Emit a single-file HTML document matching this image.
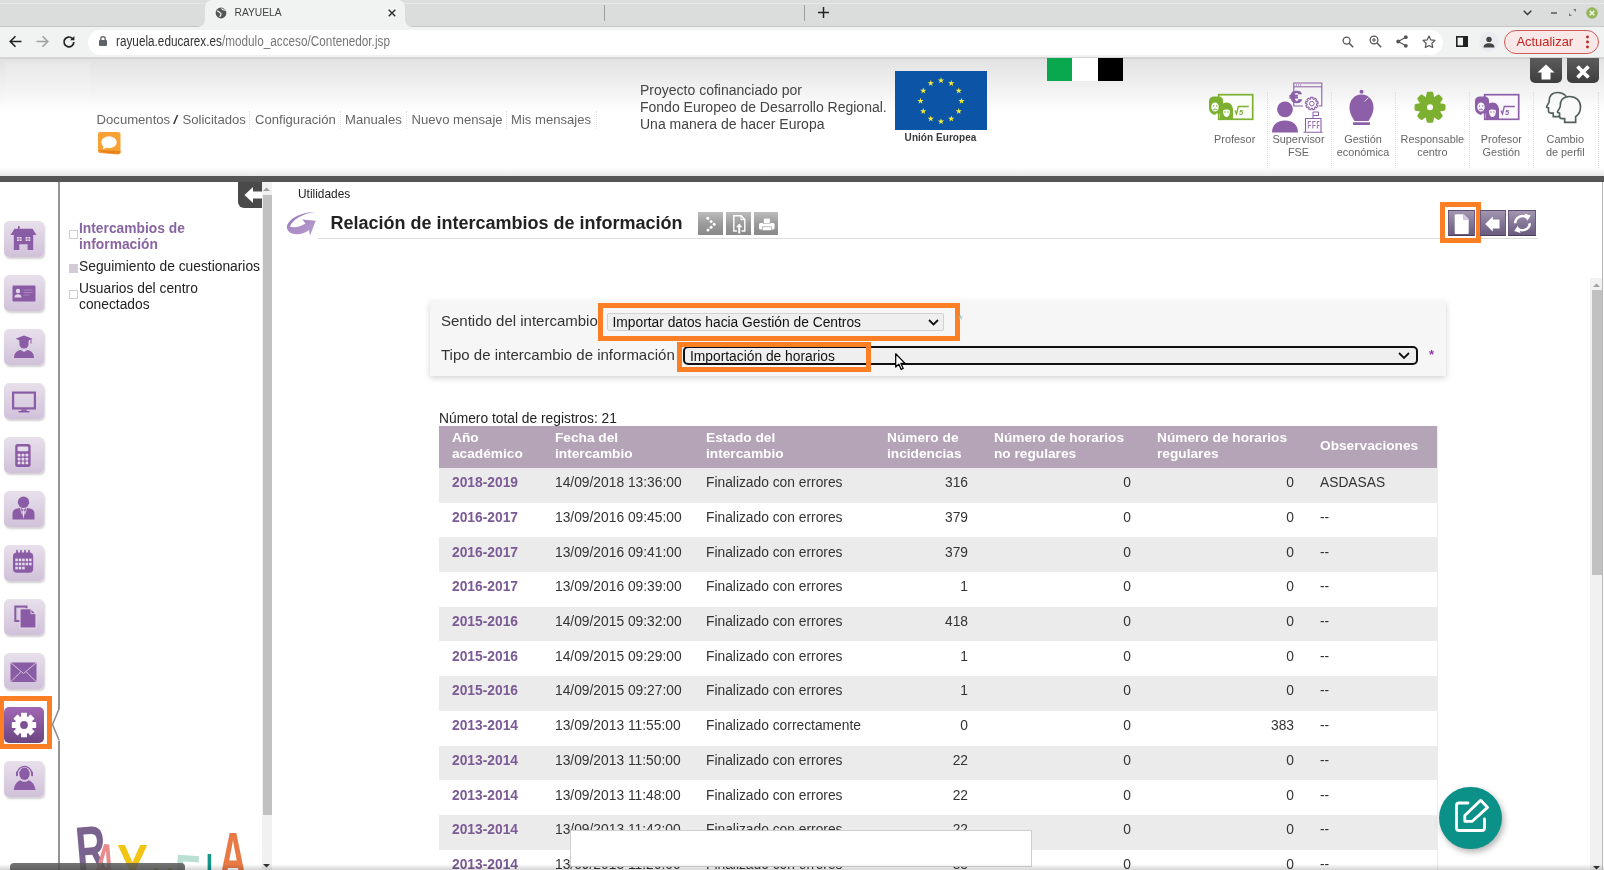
<!DOCTYPE html>
<html lang="es">
<head>
<meta charset="utf-8">
<title>RAYUELA</title>
<style>
*{box-sizing:border-box;margin:0;padding:0}
html,body{width:1604px;height:870px;overflow:hidden;background:#fff}
body{will-change:transform;position:relative;font-family:"Liberation Sans",sans-serif;font-size:14px;color:#222}
.abs{position:absolute}
svg{display:block;overflow:visible}

/* ---------- browser chrome ---------- */
#tabbar{left:0;top:0;width:1604px;height:27px;background:#dbdddd;border-bottom:1px solid #c6c8c8}
#tabbar .hl{left:0;top:3px;width:1604px;height:1px;background:#e6e8e8}
#tab{left:205px;top:0;width:199.500px;height:27px;background:#f1f2f2;border-radius:7px 7px 0 0}
#tab .ttl{left:29.500px;top:7.200px;font-size:10.300px;color:#444;letter-spacing:-.05px}
.tsep{top:5px;width:1px;height:16px;background:#9a9d9d}
#toolbar{left:0;top:27px;width:1604px;height:30px;background:#f1f2f2}
#tbline{left:0;top:57px;width:1604px;height:2px;background:#d4d4d4}
#urlpill{left:88px;top:29.500px;width:1355px;height:25.500px;background:#fff;border-radius:13px}
#url{left:116px;top:33px;font-size:14px;color:#333;white-space:nowrap;transform-origin:0 0;transform:scaleX(.84)}
#url span{color:#777}
#upd{left:1504px;top:30px;width:94.500px;height:24px;border:1px solid #cf5a57;border-radius:12px;background:#f9e8e7;color:#c5221f;font-size:12.900px;line-height:22px;padding-left:11.500px}
#prof{left:1479px;top:31.500px;width:20px;height:20px;border-radius:10px;background:#e9ecf1}

/* ---------- page header ---------- */
#hdr{left:0;top:59px;width:1604px;height:118px;background:linear-gradient(#e2e2e2 0,#ebebeb 14%,#f6f6f6 32%,#fff 46%,#fff 92%,#e4e4e4 100%)}
#darkbar{left:0;top:176px;width:1604px;height:6px;background:#555}
#nav{font-size:13.1px;color:#666;white-space:nowrap}
#nav b{color:#333;font-style:italic}
#nav i{font-style:normal;color:#ddd}
#eutxt{left:640px;top:82px;font-size:14px;line-height:17px;color:#444;white-space:nowrap}
#euflag{left:895px;top:70.700px;width:91.700px;height:59.300px;background:#0b54a6}
#eulbl{left:894.500px;top:131.800px;width:92px;text-align:center;font-size:10px;font-weight:bold;color:#3a3a3a;letter-spacing:.05px}
.fl{top:58.200px;width:25.500px;height:22.400px}
.role{top:133px;font-size:10.900px;line-height:12.900px;color:#666;text-align:center;width:70px}
.hbtn{top:58px;width:30px;height:25.200px;background:linear-gradient(#5c5c5c,#3d3d3d);border-radius:0 0 5px 5px}

/* ---------- left ---------- */
#vline{left:58.400px;top:182px;width:1.700px;height:688px;background:#949494}
.sb{left:4px;width:40px;height:36px;border-radius:5px;background:linear-gradient(#e8e0eb,#d0c1d9);box-shadow:1px 2px 2px rgba(60,40,70,.22)}
#menu{font-size:13.8px;line-height:16px;color:#222}
.cb{width:9px;height:9px;border:1px solid #d3cbd8;background:#fff}
#mscroll{left:262px;top:182px;width:10px;height:688px;background:#f1f1f1}
#mthumb{left:262.500px;top:195px;width:9px;height:620px;background:#c1c1c1}
#collapse{left:238px;top:182px;width:24px;height:26px;background:#4a4a4a;border-radius:0 0 0 6px}

/* ---------- content ---------- */
#crumb{left:298px;top:187px;font-size:11.900px;color:#222}
#title{left:330.500px;top:213px;font-size:18px;font-weight:bold;color:#222;white-space:nowrap}
#tline{left:318px;top:237.500px;width:1220px;height:1.500px;background:#dcdcdc}
.gbtn{top:212px;width:24px;height:23px;background:linear-gradient(#bcbcbc,#9c9c9c 50%,#888)}
.pbtn{top:210px;height:26px;background:linear-gradient(#a296b0,#867a99 45%,#6b5b7f);border:1px solid #6a5a80;border-top-color:#5d4d74;border-bottom-color:#4d405f}
.obox{border:5px solid #fd7f25}
#form{left:430px;top:301px;width:1016px;height:75px;background:#f6f6f6;box-shadow:0 2px 6px rgba(0,0,0,.18)}
.lbl{font-size:15px;color:#333;white-space:nowrap}
.sel{background:#efefef;font-size:13.8px;color:#111;white-space:nowrap}
#cscroll{left:1590px;top:278px;width:11.500px;height:592px;background:#f1f1f1}
#cthumb{left:1592px;top:290px;width:9.500px;height:285px;background:#c1c1c1}
#wedge{left:1601.700px;top:182px;width:1.500px;height:688px;background:#b8b8b8}

/* table */
#cnt{left:439px;top:410.500px;font-size:13.8px;color:#222}
#tbl{left:439px;top:426px;width:998px;border-collapse:collapse;font-size:13.8px;color:#333}
#tbl th{background:#b5a3b8;color:#fff;font-size:13.7px;line-height:15.7px;text-align:left;font-weight:bold;padding:0 0 3px 13px;height:42px;vertical-align:middle}
#tbl td{height:34.7px;padding:0 0 5px 13px;white-space:nowrap}
#tbl tr:nth-child(even) td{background:#ebebeb}
#tbl td.y{color:#7b5a96;font-weight:bold}
#tbl td.n{text-align:right;padding-right:13px}
#fab{left:1439.300px;top:786.700px;width:62.500px;height:62.500px;border-radius:32px;background:#0c9189;box-shadow:2px 3px 6px rgba(0,0,0,.3)}
#popup{left:569.500px;top:830px;width:462.500px;height:36.500px;background:#fff;border:1px solid #cfcfcf}
#hbar{left:10px;top:863px;width:175px;height:8px;background:rgba(90,90,90,.85);border-radius:4px 4px 0 0}
</style>
</head>
<body>

<!-- ======= browser chrome ======= -->
<div id="tabbar" class="abs"><div class="hl abs"></div></div>
<div id="tab" class="abs">
  <svg class="abs" style="left:9.500px;top:6.500px" width="12" height="12" viewBox="0 0 12 12"><circle cx="6" cy="6" r="5.4" fill="#555"/><path d="M2 4.2c1.2-.2 2 .3 2.500 1.200s1.700.6 1.600 1.900c-.1 1-1 1.300-1.300 2.600" stroke="#f2f3f3" stroke-width="1.200" fill="none"/><path d="M7 1.200c-.3 1 .6 1.500 1.500 1.500s1.400.7 2.200.7" stroke="#f2f3f3" stroke-width="1.100" fill="none"/></svg>
  <div class="ttl abs">RAYUELA</div>
  <svg class="abs" style="left:182.500px;top:8.700px" width="8" height="8" viewBox="0 0 8 8"><path d="M.7.7l6.600 6.600M7.300.7L.7 7.300" stroke="#333" stroke-width="1.500"/></svg>
</div>
<svg class="abs" style="left:197px;top:19px" width="8" height="8" viewBox="0 0 8 8"><path d="M8 0v8H0c5 0 8-3 8-8z" fill="#f1f2f2"/></svg><svg class="abs" style="left:404.500px;top:19px" width="8" height="8" viewBox="0 0 8 8"><path d="M0 0v8h8c-5 0-8-3-8-8z" fill="#f1f2f2"/></svg>
<div class="tsep abs" style="left:604px"></div>
<div class="tsep abs" style="left:804px"></div>
<svg class="abs" style="left:818px;top:7px" width="11" height="11" viewBox="0 0 11 11"><path d="M5.500 0v11M0 5.500h11" stroke="#222" stroke-width="1.500"/></svg>
<svg class="abs" style="left:1523px;top:10px" width="9" height="6" viewBox="0 0 9 6"><path d="M.7.700l3.800 3.800L8.300.700" stroke="#333" stroke-width="1.400" fill="none"/></svg>
<div class="abs" style="left:1551px;top:12px;width:6px;height:2px;background:#777"></div>
<svg class="abs" style="left:1569px;top:9px" width="7" height="7" viewBox="0 0 7 7"><path d="M4 0h3v3zM0 7V4l3 3z" fill="#777"/></svg>
<svg class="abs" style="left:1585px;top:6px" width="14" height="14" viewBox="0 0 14 14"><circle cx="7" cy="7" r="5.800" fill="#96b65c"/><path d="M4.700 4.700l4.600 4.600M9.300 4.700L4.700 9.300" stroke="#f4f8ec" stroke-width="1.500"/></svg>

<div id="toolbar" class="abs"></div>
<div id="tbline" class="abs"></div>
<svg class="abs" style="left:9px;top:35px" width="13" height="13" viewBox="0 0 13 13"><path d="M12.500 6.500H1.500M6.500 1.200L1.200 6.500l5.300 5.300" stroke="#222" stroke-width="1.600" fill="none"/></svg>
<svg class="abs" style="left:36px;top:35px" width="13" height="13" viewBox="0 0 13 13"><path d="M.5 6.500h11M6.500 1.200l5.300 5.300-5.300 5.300" stroke="#a0a0a0" stroke-width="1.600" fill="none"/></svg>
<svg class="abs" style="left:62px;top:35px" width="14" height="14" viewBox="0 0 14 14"><path d="M11.800 7a4.900 4.900 0 1 1-1.500-3.600" stroke="#222" stroke-width="1.700" fill="none"/><path d="M12.400.9v4.400H8z" fill="#222"/></svg>
<div id="urlpill" class="abs"></div>
<svg class="abs" style="left:99px;top:36px" width="8" height="10" viewBox="0 0 8 10"><rect x="0" y="4" width="8" height="6" rx="1" fill="#5f6368"/><path d="M1.800 4.500V2.800a2.200 2.200 0 0 1 4.400 0v1.700" stroke="#5f6368" stroke-width="1.300" fill="none"/></svg>
<div id="url" class="abs">rayuela.educarex.es<span>/modulo_acceso/Contenedor.jsp</span></div>
<!-- toolbar right icons -->
<svg class="abs" style="left:1342px;top:36px" width="12" height="12" viewBox="0 0 12 12"><circle cx="4.600" cy="4.600" r="3.500" stroke="#555" stroke-width="1.300" fill="none"/><path d="M7.300 7.300l3.900 3.900" stroke="#555" stroke-width="1.500"/></svg>
<svg class="abs" style="left:1369px;top:35px" width="13" height="13" viewBox="0 0 13 13"><circle cx="5" cy="5" r="3.900" stroke="#555" stroke-width="1.300" fill="none"/><path d="M8 8l4.200 4.200" stroke="#555" stroke-width="1.500"/><path d="M3 5h4M5 3v4" stroke="#555" stroke-width="1.100"/></svg>
<svg class="abs" style="left:1396px;top:35px" width="12" height="13" viewBox="0 0 12 13"><circle cx="9.800" cy="2.200" r="1.900" fill="#555"/><circle cx="2.200" cy="6.500" r="1.900" fill="#555"/><circle cx="9.800" cy="10.800" r="1.900" fill="#555"/><path d="M9.800 2.200L2.200 6.500l7.600 4.300" stroke="#555" stroke-width="1.100" fill="none"/></svg>
<svg class="abs" style="left:1422px;top:35px" width="14" height="13" viewBox="0 0 14 13"><path d="M7 1l1.800 3.900 4.200.5-3.100 2.900.8 4.200L7 10.400l-3.700 2.100.8-4.200L1 5.400l4.200-.5z" stroke="#555" stroke-width="1.200" fill="none" stroke-linejoin="round"/></svg>
<svg class="abs" style="left:1456px;top:36px" width="12" height="11" viewBox="0 0 12 11"><rect x=".8" y=".8" width="10.400" height="9.400" stroke="#222" stroke-width="1.600" fill="none"/><rect x="7" y=".8" width="4.200" height="9.400" fill="#222"/></svg>
<div id="prof" class="abs"><svg class="abs" style="left:4px;top:4px" width="12" height="12" viewBox="0 0 12 12"><circle cx="6" cy="3.400" r="2.700" fill="#444"/><path d="M.5 11.500c0-3 2.500-4.200 5.500-4.200s5.500 1.200 5.500 4.200z" fill="#444"/></svg></div>
<div id="upd" class="abs">Actualizar<svg class="abs" style="left:80.500px;top:4px" width="3" height="14" viewBox="0 0 3 14"><circle cx="1.500" cy="2" r="1.400" fill="#b3261e"/><circle cx="1.500" cy="7" r="1.400" fill="#b3261e"/><circle cx="1.500" cy="12" r="1.400" fill="#b3261e"/></svg></div>

<!-- ======= page header ======= -->
<div id="hdr" class="abs"></div>
<div id="darkbar" class="abs"></div>
<div class="abs" style="left:5px;top:62px;width:85px;height:56px;background:linear-gradient(rgba(255,255,255,.16),rgba(255,255,255,.05))"></div>
<div id="nav"><div class="abs" style="left:96.6px;top:112px">Documentos</div><div class="abs" style="left:182.5px;top:112px">Solicitados</div><div class="abs" style="left:255px;top:112px">Configuración</div><div class="abs" style="left:345px;top:112px">Manuales</div><div class="abs" style="left:411.6px;top:112px">Nuevo mensaje</div><div class="abs" style="left:511px;top:112px">Mis mensajes</div><div class="abs" style="left:173.500px;top:112px;color:#333;font-weight:bold;font-style:italic">/</div><div class="abs" style="left:249px;top:111px;width:0;height:18px;border-left:1px dotted #dedede"></div><div class="abs" style="left:340px;top:111px;width:0;height:18px;border-left:1px dotted #dedede"></div><div class="abs" style="left:406px;top:111px;width:0;height:18px;border-left:1px dotted #dedede"></div><div class="abs" style="left:506px;top:111px;width:0;height:18px;border-left:1px dotted #dedede"></div><div class="abs" style="left:596px;top:111px;width:0;height:18px;border-left:1px dotted #dedede"></div></div>
<div id="eutxt" class="abs">Proyecto cofinanciado por<br>Fondo Europeo de Desarrollo Regional.<br>Una manera de hacer Europa</div>
<div id="euflag" class="abs"></div>
<svg class="abs" style="left:894.500px;top:70.700px" width="92" height="60" viewBox="0 0 92 60"><path d="M46.00 6.20L46.74 8.48L49.14 8.48L47.20 9.89L47.94 12.17L46.00 10.76L44.06 12.17L44.80 9.89L42.86 8.48L45.26 8.48z" fill="#f6ee36"/><path d="M56.25 8.95L56.99 11.23L59.39 11.23L57.45 12.64L58.19 14.92L56.25 13.51L54.31 14.92L55.05 12.64L53.11 11.23L55.51 11.23z" fill="#f6ee36"/><path d="M63.75 16.45L64.49 18.73L66.89 18.73L64.95 20.14L65.69 22.42L63.75 21.01L61.81 22.42L62.55 20.14L60.62 18.73L63.01 18.73z" fill="#f6ee36"/><path d="M66.50 26.70L67.24 28.98L69.64 28.98L67.70 30.39L68.44 32.67L66.50 31.26L64.56 32.67L65.30 30.39L63.36 28.98L65.76 28.98z" fill="#f6ee36"/><path d="M63.75 36.95L64.49 39.23L66.89 39.23L64.95 40.64L65.69 42.92L63.75 41.51L61.81 42.92L62.55 40.64L60.62 39.23L63.01 39.23z" fill="#f6ee36"/><path d="M56.25 44.45L56.99 46.73L59.39 46.73L57.45 48.14L58.19 50.42L56.25 49.01L54.31 50.42L55.05 48.14L53.11 46.73L55.51 46.73z" fill="#f6ee36"/><path d="M46.00 47.20L46.74 49.48L49.14 49.48L47.20 50.89L47.94 53.17L46.00 51.76L44.06 53.17L44.80 50.89L42.86 49.48L45.26 49.48z" fill="#f6ee36"/><path d="M35.75 44.45L36.49 46.73L38.89 46.73L36.95 48.14L37.69 50.42L35.75 49.01L33.81 50.42L34.55 48.14L32.61 46.73L35.01 46.73z" fill="#f6ee36"/><path d="M28.25 36.95L28.99 39.23L31.38 39.23L29.45 40.64L30.19 42.92L28.25 41.51L26.31 42.92L27.05 40.64L25.11 39.23L27.51 39.23z" fill="#f6ee36"/><path d="M25.50 26.70L26.24 28.98L28.64 28.98L26.70 30.39L27.44 32.67L25.50 31.26L23.56 32.67L24.30 30.39L22.36 28.98L24.76 28.98z" fill="#f6ee36"/><path d="M28.25 16.45L28.99 18.73L31.38 18.73L29.45 20.14L30.19 22.42L28.25 21.01L26.31 22.42L27.05 20.14L25.11 18.73L27.51 18.73z" fill="#f6ee36"/><path d="M35.75 8.95L36.49 11.23L38.89 11.23L36.95 12.64L37.69 14.92L35.75 13.51L33.81 14.92L34.55 12.64L32.61 11.23L35.01 11.23z" fill="#f6ee36"/></svg>
<div id="eulbl" class="abs">Unión Europea</div>
<div class="fl abs" style="left:1046.500px;background:#09a84e"></div>
<div class="fl abs" style="left:1072px;background:#fff"></div>
<div class="fl abs" style="left:1097.500px;background:#000"></div>

<svg class="abs" style="left:1208px;top:93px" width="46" height="28" viewBox="0 0 46 28"><rect x="10.700" y="1.700" width="34" height="24.600" fill="#fbfdf8" stroke="#7db030" stroke-width="1.700"/><path d="M1 8c0-3 2-4.500 5-4.500h5c2 0 3.500 1.500 4 3.500v13.500H8.500L7 22c-4-1-6-3.500-6-7z" fill="#7db030"/><ellipse cx="7" cy="14" rx="3.700" ry="4.600" fill="#fbfdf8"/><path d="M4.800 17.200c1.500-1.500 3-1.500 4.500 0" stroke="#7db030" stroke-width="1" fill="none"/><circle cx="5.500" cy="13" r=".7" fill="#7db030"/><circle cx="8.800" cy="13" r=".7" fill="#7db030"/><path d="M12 27V17c0-4 2.500-7.500 6.500-7.500s6.500 3.500 6.500 7.500v10z" fill="#7db030"/><path d="M15 17.500c1-1.500 5.500-1.500 7 0 0 4-1.500 6.500-3.500 6.500s-3.500-2.500-3.500-6.500z" fill="#fbfdf8"/><circle cx="17" cy="19" r=".7" fill="#7db030"/><circle cx="20" cy="19" r=".7" fill="#7db030"/><path d="M27 17.500l1.500 3.500 1.800-7.500h10.500" stroke="#7db030" stroke-width="1.300" fill="none"/><text x="31" y="22" font-size="7.500" font-weight="bold" font-style="italic" fill="#7db030" font-family="Liberation Sans, sans-serif">5</text></svg><svg class="abs" style="left:1270px;top:81px" width="54" height="53" viewBox="1270 81 54 53"><circle cx="1285" cy="109.300" r="7.900" fill="#8d5fa8"/><path d="M1272 132.500c0-8 5.500-12 13-12s13 4 13 12z" fill="#8d5fa8"/><path d="M1303 106h-9.200V83h28v23h-3" fill="none" stroke="#8d5fa8" stroke-width="1.100"/><path d="M1293.800 86.800h28" stroke="#8d5fa8" stroke-width="1"/><path d="M1296 85h1M1298 85h1M1300 85h1" stroke="#8d5fa8" stroke-width="1"/><text x="1289.500" y="103" font-size="17" font-weight="bold" fill="#8d5fa8" stroke="#8d5fa8" stroke-width=".5" font-family="Liberation Sans, sans-serif" textLength="12.500" lengthAdjust="spacingAndGlyphs">€</text><path d="M1310.62 97.41L1312.98 97.41L1312.90 98.93L1313.96 99.32L1314.87 98.10L1316.68 99.62L1315.64 100.72L1316.21 101.71L1317.69 101.36L1318.10 103.69L1316.59 103.87L1316.40 104.99L1317.75 105.67L1316.57 107.72L1315.30 106.89L1314.43 107.62L1315.03 109.01L1312.81 109.82L1312.37 108.37L1311.23 108.37L1310.79 109.82L1308.57 109.01L1309.17 107.62L1308.30 106.89L1307.03 107.72L1305.85 105.67L1307.20 104.99L1307.01 103.87L1305.50 103.69L1305.91 101.36L1307.39 101.71L1307.96 100.72L1306.92 99.62L1308.73 98.10L1309.64 99.32L1310.70 98.93z" fill="#fff" stroke="#8d5fa8" stroke-width="1.100" stroke-linejoin="round"/><circle cx="1311.800" cy="103.600" r="2.300" fill="none" stroke="#8d5fa8" stroke-width="1"/><path d="M1305.500 132V118.500h15.500V132M1303.500 132.200h19" fill="none" stroke="#8d5fa8" stroke-width="1.100"/><path d="M1313 118.500v-6.500h5.500v3.500h-5.500" fill="none" stroke="#8d5fa8" stroke-width="1"/><path d="M1308 121.500h3M1312.500 121.500h3M1317 121.500h2.500M1308 125.500h3M1312.500 125.500h3M1317 125.500h2.500M1308.300 121.500v3M1312.800 121.500v3M1317.300 121.500v3M1308.300 125.500v3M1312.800 125.500v3M1317.300 125.500v3" stroke="#8d5fa8" stroke-width=".9"/></svg><svg class="abs" style="left:1347px;top:88px" width="30" height="40" viewBox="1347 88 30 40"><circle cx="1361.500" cy="91.800" r="2" fill="#8d5fa8"/><path d="M1361.500 94.500c7.500 0 12 6 12 13 0 5.500-2.500 9.500-5 13.500h-14c-2.500-4-5-8-5-13.500 0-7 4.500-13 12-13z" fill="#8d5fa8"/><rect x="1353" y="122.300" width="17" height="2.700" rx=".8" fill="#8d5fa8"/><path d="M1364.500 101.500l4-4" stroke="#e9dff0" stroke-width="1"/></svg><svg class="abs" style="left:1412px;top:90px" width="36" height="36" viewBox="1412 90 36 36"><path d="M1428.12 93.33L1431.88 93.33L1432.87 98.46L1434.22 99.01L1438.55 96.09L1441.21 98.75L1438.29 103.08L1438.84 104.43L1443.97 105.42L1443.97 109.18L1438.84 110.17L1438.29 111.52L1441.21 115.85L1438.55 118.51L1434.22 115.59L1432.87 116.14L1431.88 121.27L1428.12 121.27L1427.13 116.14L1425.78 115.59L1421.45 118.51L1418.79 115.85L1421.71 111.52L1421.16 110.17L1416.03 109.18L1416.03 105.42L1421.16 104.43L1421.71 103.08L1418.79 98.75L1421.45 96.09L1425.78 99.01L1427.13 98.46z" fill="#7db030" stroke="#7db030" stroke-width="3.0" stroke-linejoin="round"/><circle cx="1430" cy="107.3" r="3" fill="#fff"/></svg><svg class="abs" style="left:1474px;top:93px" width="46" height="28" viewBox="0 0 46 28"><rect x="10.700" y="1.700" width="34" height="24.600" fill="#fbf8fd" stroke="#8d5fa8" stroke-width="1.700"/><path d="M1 8c0-3 2-4.500 5-4.500h5c2 0 3.500 1.500 4 3.500v13.500H8.500L7 22c-4-1-6-3.500-6-7z" fill="#8d5fa8"/><ellipse cx="7" cy="14" rx="3.700" ry="4.600" fill="#fbf8fd"/><path d="M4.800 17.200c1.500-1.500 3-1.500 4.500 0" stroke="#8d5fa8" stroke-width="1" fill="none"/><circle cx="5.500" cy="13" r=".7" fill="#8d5fa8"/><circle cx="8.800" cy="13" r=".7" fill="#8d5fa8"/><path d="M12 27V17c0-4 2.500-7.500 6.500-7.500s6.500 3.500 6.500 7.500v10z" fill="#8d5fa8"/><path d="M15 17.500c1-1.500 5.500-1.500 7 0 0 4-1.500 6.500-3.500 6.500s-3.500-2.500-3.500-6.500z" fill="#fbf8fd"/><circle cx="17" cy="19" r=".7" fill="#8d5fa8"/><circle cx="20" cy="19" r=".7" fill="#8d5fa8"/><path d="M27 17.500l1.500 3.500 1.800-7.500h10.500" stroke="#8d5fa8" stroke-width="1.300" fill="none"/><text x="31" y="22" font-size="7.500" font-weight="bold" font-style="italic" fill="#8d5fa8" font-family="Liberation Sans, sans-serif">5</text></svg><svg class="abs" style="left:1544px;top:91px" width="40" height="33" viewBox="0 0 40 33"><g transform="translate(3.500,1.500) scale(.82)"><path d="M12.500 0C5 0 1.500 5 2 10.500c.1 1.200-.3 2-1 3L-1 17c-.4.700 0 1.200.8 1.400l1.400.4v3.600c0 1.800 1 2.700 2.800 2.700H7v4.300h12.500V23c3-2 5.500-6 5.500-11C25 5 20 0 12.500 0z" fill="none" stroke="#4f6158" stroke-width="2"/></g><g transform="translate(14.500,5.500) scale(.88)"><path d="M12.500 0C5 0 1.500 5 2 10.500c.1 1.200-.3 2-1 3L-1 17c-.4.700 0 1.200.8 1.400l1.400.4v3.600c0 1.800 1 2.700 2.800 2.700H7v4.300h12.500V23c3-2 5.500-6 5.500-11C25 5 20 0 12.500 0z" fill="#fafafa" stroke="#4f6158" stroke-width="1.900"/></g></svg><div class="role abs" style="left:1194.7px;width:80px">Profesor</div><div class="role abs" style="left:1258.5px;width:80px">Supervisor<br>FSE</div><div class="role abs" style="left:1323.0px;width:80px">Gestión<br>económica</div><div class="role abs" style="left:1392.4px;width:80px">Responsable<br>centro</div><div class="role abs" style="left:1461.4px;width:80px">Profesor<br>Gestión</div><div class="role abs" style="left:1525.3px;width:80px">Cambio<br>de perfil</div><div class="abs" style="left:1267px;top:92px;width:0;height:76px;border-left:1px dotted #dcdcdc"></div><div class="abs" style="left:1331px;top:92px;width:0;height:76px;border-left:1px dotted #dcdcdc"></div><div class="abs" style="left:1395px;top:92px;width:0;height:76px;border-left:1px dotted #dcdcdc"></div><div class="abs" style="left:1469px;top:92px;width:0;height:76px;border-left:1px dotted #dcdcdc"></div><div class="abs" style="left:1533px;top:92px;width:0;height:76px;border-left:1px dotted #dcdcdc"></div><div class="abs" style="left:1598px;top:92px;width:0;height:76px;border-left:1px dotted #dcdcdc"></div><div class="hbtn abs" style="left:1530px;width:31.500px"><svg class="abs" style="left:7px;top:5.500px" width="18" height="16" viewBox="0 0 18 16"><path d="M9 .5l8.500 8h-4V15.500h-9V8.500h-4z" fill="#fff"/></svg></div><div class="hbtn abs" style="left:1567.200px;width:31.800px"><svg class="abs" style="left:8px;top:5.500px" width="16" height="16" viewBox="0 0 16 16"><path d="M2.500 2.500l11 11M13.500 2.500l-11 11" stroke="#fff" stroke-width="3.800"/></svg></div><svg class="abs" style="left:97px;top:131px" width="25" height="25" viewBox="0 0 25 25"><path d="M3 1h18c1.500 0 2.500 1 2.500 2.500V21c0 1.500-1 2.500-2.500 2.500L3 22c-1.300 0-2-1-2-2.300V3.300C1 2 1.700 1 3 1z" fill="#f7a033"/><path d="M1 19c4 3 15 4.500 22.500 3l0-2z" fill="#e8821c"/><ellipse cx="12" cy="11.300" rx="7.700" ry="6" fill="#fff"/><path d="M7 15l-1.500 3.500 4.500-2z" fill="#fff"/></svg>
<!-- ======= left ======= -->
<div id="vline" class="abs"></div>
<div id="mscroll" class="abs"></div>
<div id="mthumb" class="abs"></div>
<div id="collapse" class="abs"></div>
<div class="sb abs" style="top:221px"><svg width="40" height="36" viewBox="0 0 40 36"><path d="M10.500 7.800h18l4 6.200H6.500z" fill="#8a5ca5"/><rect x="14" y="5" width="1.600" height="4" fill="#8a5ca5"/><path d="M9.800 14h19.400v15h-5.600v-5.800h-8.300V29H9.800z" fill="#8a5ca5"/><rect x="13" y="16" width="4.500" height="4" fill="#e6dcea"/><rect x="21.700" y="16" width="4.500" height="4" fill="#e6dcea"/><path d="M15.250 16v4M13 18h4.500M23.950 16v4M21.700 18h4.500" stroke="#8a5ca5" stroke-width=".7"/></svg></div>
<div class="sb abs" style="top:275px"><svg width="40" height="36" viewBox="0 0 40 36"><rect x="8.500" y="10.500" width="23" height="16" rx="1" fill="#8a5ca5"/><circle cx="14" cy="16" r="2.200" fill="#e3d6e8"/><path d="M10.500 22.500c0-2.300 1.500-3.300 3.500-3.300s3.500 1 3.500 3.300z" fill="#e3d6e8"/><path d="M19.500 15h9M19.500 17.500h9M19.500 20h6" stroke="#a883bd" stroke-width="1"/></svg></div>
<div class="sb abs" style="top:329px"><svg width="40" height="36" viewBox="0 0 40 36"><path d="M20 6.500l8.500 3.200L20 13l-8.500-3.300z" fill="#8a5ca5"/><circle cx="20" cy="15" r="4.600" fill="#8a5ca5"/><path d="M15.300 10.500h9.400v3h-9.400z" fill="#8a5ca5"/><path d="M27 10v4.500" stroke="#8a5ca5" stroke-width="1"/><path d="M10 29c0-5.500 3.500-7.500 6.500-8l3.500 2 3.500-2c3 .5 6.500 2.500 6.500 8z" fill="#8a5ca5"/></svg></div>
<div class="sb abs" style="top:383px"><svg width="40" height="36" viewBox="0 0 40 36"><rect x="9.100" y="9.600" width="21.800" height="15.800" fill="none" stroke="#8a5ca5" stroke-width="2.200"/><path d="M17.500 26.500h5l.8 2h-6.600z" fill="#8a5ca5"/><rect x="14.500" y="28" width="11" height="1.500" fill="#8a5ca5"/></svg></div>
<div class="sb abs" style="top:437px"><svg width="40" height="36" viewBox="0 0 40 36"><rect x="11.200" y="7" width="15.400" height="23" rx="2.500" fill="#8a5ca5"/><rect x="13.500" y="9.500" width="10.800" height="4.800" rx="1.200" fill="#e6dcea"/><rect x="13.7" y="16.8" width="2.700" height="2.700" rx=".5" fill="#e6dcea"/><rect x="17.6" y="16.8" width="2.700" height="2.700" rx=".5" fill="#e6dcea"/><rect x="21.5" y="16.8" width="2.700" height="2.700" rx=".5" fill="#e6dcea"/><rect x="13.7" y="20.7" width="2.700" height="2.700" rx=".5" fill="#e6dcea"/><rect x="17.6" y="20.7" width="2.700" height="2.700" rx=".5" fill="#e6dcea"/><rect x="21.5" y="20.7" width="2.700" height="2.700" rx=".5" fill="#e6dcea"/><rect x="13.7" y="24.6" width="2.700" height="2.700" rx=".5" fill="#e6dcea"/><rect x="17.6" y="24.6" width="2.700" height="2.700" rx=".5" fill="#e6dcea"/><rect x="21.5" y="24.6" width="2.700" height="2.700" rx=".5" fill="#e6dcea"/></svg></div>
<div class="sb abs" style="top:491px"><svg width="40" height="36" viewBox="0 0 40 36"><circle cx="19.500" cy="11.200" r="5.700" fill="#8a5ca5"/><path d="M8.500 28.500v-6c0-3 2-4.500 5-5l3-.8 3 2.300 3-2.300 3 .8c3 .5 5 2 5 5v6z" fill="#8a5ca5"/><path d="M19.500 19l-1.400 1.600 1.400 7.400 1.400-7.400z" fill="#e6dcea"/><path d="M16.300 17.200l1.800 6M22.700 17.200l-1.800 6" stroke="#e6dcea" stroke-width=".8" fill="none"/></svg></div>
<div class="sb abs" style="top:545px"><svg width="40" height="36" viewBox="0 0 40 36"><rect x="9" y="7.500" width="20.200" height="20.200" rx="4" fill="#8a5ca5"/><path d="M13 5.500v3.500M17 5.500v3.500M21 5.500v3.500M25 5.500v3.500" stroke="#8a5ca5" stroke-width="1.700" stroke-linecap="round"/><rect x="11.30" y="13.60" width="2.500" height="2.600" fill="#e6dcea"/><rect x="14.75" y="13.60" width="2.500" height="2.600" fill="#e6dcea"/><rect x="18.20" y="13.60" width="2.500" height="2.600" fill="#e6dcea"/><rect x="21.65" y="13.60" width="2.500" height="2.600" fill="#e6dcea"/><rect x="25.10" y="13.60" width="2.500" height="2.600" fill="#e6dcea"/><rect x="11.30" y="17.70" width="2.500" height="2.600" fill="#e6dcea"/><rect x="14.75" y="17.70" width="2.500" height="2.600" fill="#e6dcea"/><rect x="18.20" y="17.70" width="2.500" height="2.600" fill="#e6dcea"/><rect x="21.65" y="17.70" width="2.500" height="2.600" fill="#e6dcea"/><rect x="25.10" y="17.70" width="2.500" height="2.600" fill="#e6dcea"/><rect x="11.30" y="21.80" width="2.500" height="2.600" fill="#e6dcea"/><rect x="14.75" y="21.80" width="2.500" height="2.600" fill="#e6dcea"/><rect x="18.20" y="21.80" width="2.500" height="2.600" fill="#e6dcea"/></svg></div>
<div class="sb abs" style="top:599px"><svg width="40" height="36" viewBox="0 0 40 36"><path d="M10.300 6.600h13.200v4h-6.800v12.400h-6.400z" fill="#8a5ca5"/><rect x="12.300" y="8.600" width="9.200" height="12.400" fill="#d9cbe1"/><path d="M16 9.700h11l5 5V29H16z" fill="#8a5ca5" stroke="#e6dcea" stroke-width="1.100"/><path d="M27 9.700v5h5" fill="none" stroke="#e6dcea" stroke-width=".9"/></svg></div>
<div class="sb abs" style="top:653px"><svg width="40" height="36" viewBox="0 0 40 36"><rect x="6.500" y="9.500" width="26" height="19.500" rx="1" fill="#8a5ca5"/><path d="M6.500 9.500l13 11 13-11M6.500 29l10.400-10.200M32.500 29L22.100 18.800" fill="none" stroke="#d5c3df" stroke-width="1"/></svg></div>
<div class="obox abs" style="left:-1px;top:696px;width:53px;height:53px"></div>
<div class="sb abs" style="top:707px;background:linear-gradient(#a067b4,#6b4581);box-shadow:none"><svg width="40" height="36" viewBox="0 0 40 36"><path d="M17.52 6.46L22.48 6.46L22.20 9.69L24.32 10.56L26.40 8.09L29.91 11.60L27.44 13.68L28.31 15.80L31.54 15.52L31.54 20.48L28.31 20.20L27.44 22.32L29.91 24.40L26.40 27.91L24.32 25.44L22.20 26.31L22.48 29.54L17.52 29.54L17.80 26.31L15.68 25.44L13.60 27.91L10.09 24.40L12.56 22.32L11.69 20.20L8.46 20.48L8.46 15.52L11.69 15.80L12.56 13.68L10.09 11.60L13.60 8.09L15.68 10.56L17.80 9.69z" fill="#fff" stroke="#fff" stroke-width="1.200" stroke-linejoin="round"/><circle cx="20" cy="18" r="3.9" fill="#7d4f95"/></svg></div>
<div class="sb abs" style="top:761px"><svg width="40" height="36" viewBox="0 0 40 36"><ellipse cx="20.500" cy="12.800" rx="5.200" ry="6.200" fill="#8a5ca5"/><path d="M13.300 11.800a7.300 7.600 0 0 1 14.400 0" stroke="#8a5ca5" stroke-width="1.300" fill="none"/><rect x="12" y="10.400" width="1.900" height="4.800" rx=".8" fill="#8a5ca5"/><rect x="27.100" y="10.400" width="1.900" height="4.800" rx=".8" fill="#8a5ca5"/><path d="M9.800 29c.5-5 3.300-8.800 6.700-9.700 1.100 1 2.500 1.500 4 1.500s2.900-.5 4-1.500c3.400.9 6.500 4.700 7 9.700z" fill="#8a5ca5"/></svg></div>
<svg class="abs" style="left:50px;top:700px" width="12" height="50" viewBox="0 0 12 50"><path d="M9 0v6h3v38h-3v6" fill="none"/><rect x="7.500" y="9" width="4" height="32" fill="#fff"/><path d="M9.200 8.500L2.500 24.500l6.700 16" fill="#fff" stroke="#8a8a8a" stroke-width="1.500"/></svg>
<div id="menu">
<div class="cb abs" style="left:69px;top:230px"></div>
<div class="abs" style="left:79px;top:221px;font-weight:bold;color:#8764a2">Intercambios de<br>información</div>
<div class="cb abs" style="left:69px;top:264px;background:#d3cbd8"></div>
<div class="abs" style="left:79px;top:259px;white-space:nowrap">Seguimiento de cuestionarios</div>
<div class="cb abs" style="left:69px;top:290px"></div>
<div class="abs" style="left:79px;top:281px">Usuarios del centro<br>conectados</div>
</div>
<svg class="abs" style="left:70px;top:815px" width="185" height="55" viewBox="70 815 185 55" font-family="Liberation Sans, sans-serif" font-weight="bold">
<text x="76" y="872" font-size="66" fill="#7b6390" transform="rotate(-5 90 850)" textLength="30" lengthAdjust="spacingAndGlyphs">R</text>
<text x="94" y="884" font-size="58" fill="#e98b8d" transform="rotate(6 104 860)" textLength="22" lengthAdjust="spacingAndGlyphs">A</text>
<text x="117" y="886" font-size="60" fill="#f2c511" textLength="31" lengthAdjust="spacingAndGlyphs">Y</text>
<text x="152" y="904" font-size="52" fill="#c9d13a" textLength="22" lengthAdjust="spacingAndGlyphs">U</text>
<text x="175" y="894" font-size="56" fill="#b9e0d2" transform="rotate(4 188 860)" textLength="26" lengthAdjust="spacingAndGlyphs">E</text>
<text x="206" y="892" font-size="56" fill="#13958a" textLength="15" lengthAdjust="spacingAndGlyphs">L</text>
<text x="219" y="880" font-size="68" fill="#e87b45" textLength="28" lengthAdjust="spacingAndGlyphs">A</text>
</svg>
<div id="hbar" class="abs"></div>
<svg class="abs" style="left:262px;top:186px" width="9" height="6" viewBox="0 0 9 6"><path d="M1 5l3.500-3.500L8 5z" fill="#a0a0a0"/></svg>
<svg class="abs" style="left:262px;top:863px" width="9" height="6" viewBox="0 0 9 6"><path d="M1 1l3.500 3.500L8 1z" fill="#333"/></svg>
<svg class="abs" style="left:243px;top:185px" width="19" height="20" viewBox="0 0 19 20"><path d="M1.500 10L10 2v4.500h9v7h-9V18z" fill="#fff"/></svg>


<!-- ======= content ======= -->
<div id="crumb" class="abs">Utilidades</div>
<div id="title" class="abs">Relación de intercambios de información</div>
<div id="tline" class="abs"></div>

<svg class="abs" style="left:286px;top:210px" width="32" height="27" viewBox="0 0 32 27"><defs><linearGradient id="sw" x1="0" y1="0" x2="1" y2="1"><stop offset="0" stop-color="#6f5a8c"/><stop offset=".35" stop-color="#a88ac4"/><stop offset="1" stop-color="#b79bcb"/></linearGradient></defs><path d="M29.200 1.900C18 1.500 4 7 1 15.500C0 20 4 24.500 11 24.300C16 24.200 20 22.500 23 20L24 25.700L29.700 10.700L16.200 9.400L19.500 13.500C15 16.500 9 18 4 16.800C6 10 16 3.500 29.200 1.900Z" fill="url(#sw)"/></svg>
<div class="gbtn abs" style="left:698px;width:25px"><svg width="25" height="23" viewBox="0 0 25 23"><circle cx="9.8" cy="6.2" r="1.500" fill="#fff"/><circle cx="13.1" cy="9.4" r="1.500" fill="#fff"/><circle cx="16.2" cy="12.2" r="1.500" fill="#fff"/><circle cx="13.1" cy="15.3" r="1.500" fill="#fff"/><circle cx="10" cy="18.1" r="1.500" fill="#fff"/></svg></div>
<div class="gbtn abs" style="left:726px;width:25px"><svg width="25" height="23" viewBox="0 0 25 23"><path d="M11 19H7.800V3.800h7.200l3.800 3.800V19h-3.300" fill="none" stroke="#fff" stroke-width="1.400"/><path d="M15 3.800v3.800h3.800" fill="none" stroke="#fff" stroke-width="1"/><path d="M13.200 21.500V14" stroke="#fff" stroke-width="2"/><path d="M10 15.300l3.200-3.800 3.200 3.800z" fill="#fff"/></svg></div>
<div class="gbtn abs" style="left:754px;width:24px"><svg width="24" height="23" viewBox="0 0 24 23"><rect x="5" y="11" width="15.600" height="6.500" rx="1.500" fill="#fff"/><rect x="9.700" y="6.200" width="6.400" height="5.500" fill="#fff" stroke="#a8a8a8" stroke-width=".6"/><rect x="8.500" y="14.800" width="8.800" height="3.700" fill="#fff" stroke="#a0a0a0" stroke-width=".7"/></svg></div>

<div class="obox abs" style="left:1440px;top:202px;width:41px;height:41px"></div>
<div class="pbtn abs" style="left:1448px;width:27px"><svg width="25" height="24" viewBox="0 0 25 24"><path d="M5.700 4.300a1 1 0 0 1 1-1h8l5 5V22a1 1 0 0 1-1 1h-12a1 1 0 0 1-1-1z" fill="#fff"/><path d="M14.700 3.300v5h5" fill="#d9cfe3" stroke="#b9aacb" stroke-width=".8"/></svg></div>
<div class="pbtn abs" style="left:1480px;width:25.500px"><svg width="24" height="24" viewBox="0 0 24 24"><path d="M4.200 13l7.600-7.600v3.100h6.700v9h-6.700v3.100z" fill="#fff"/></svg></div>
<div class="pbtn abs" style="left:1508px;width:27.500px"><svg width="25" height="24" viewBox="0 0 25 24"><path d="M6.200 12.200a7.400 7.400 0 0 1 12.300-5.200" stroke="#fff" stroke-width="2.500" fill="none"/><path d="M20.800 12.200a7.400 7.400 0 0 1-12.300 5.200" stroke="#fff" stroke-width="2.500" fill="none"/><path d="M15.500 2.500l6.300 2-3.600 5.300z" fill="#fff"/><path d="M11.500 22l-6.300-2 3.600-5.300z" fill="#fff"/></svg></div>

<div id="form" class="abs"></div>
<div class="lbl abs" style="left:441px;top:312.300px">Sentido del intercambio</div>
<div class="obox abs" style="left:598px;top:302.500px;width:362px;height:38.500px"></div>
<div class="sel abs" style="left:607px;top:312.500px;width:337px;height:18.500px;line-height:17px;padding-left:4.500px;border:1px solid #d2d2d2;border-radius:2px">Importar datos hacia Gestión de Centros<svg class="abs" style="left:320px;top:5px" width="11" height="7" viewBox="0 0 11 7"><path d="M1 1l4.500 4.500L10 1" stroke="#111" stroke-width="1.800" fill="none"/></svg></div>
<div class="abs" style="left:958px;top:312px;font-size:13px;color:#9cc">*</div>
<div class="lbl abs" style="left:441px;top:346px">Tipo de intercambio de información</div>
<div class="sel abs" style="left:683px;top:346px;width:735px;height:19px;line-height:18px;padding-left:5px;border:2px solid #111;border-radius:5px">Importación de horarios<svg class="abs" style="left:713px;top:4px" width="12" height="8" viewBox="0 0 12 8"><path d="M1 1l5 5 5-5" stroke="#111" stroke-width="1.800" fill="none"/></svg></div>
<div class="obox abs" style="left:676.500px;top:342px;width:194.500px;height:30px"></div>
<div class="abs" style="left:1429px;top:347px;font-size:13px;color:#8e3aa8;font-weight:bold">*</div>
<svg class="abs" style="left:894.500px;top:352.500px" width="11" height="18" viewBox="0 0 11 18"><path d="M.7.800V14l3.100-2.900 2.300 5.300 2.100-.9-2.300-5.100h4.100z" fill="#fff" stroke="#000" stroke-width="1.250" stroke-linejoin="round"/></svg>

<div id="cnt" class="abs">Número total de registros: 21</div>
<table id="tbl" class="abs"><colgroup><col style="width:103px"><col style="width:151px"><col style="width:181px"><col style="width:107px"><col style="width:163px"><col style="width:163px"><col style="width:130px"></colgroup>
<tr><th>Año<br>académico</th><th>Fecha del<br>intercambio</th><th>Estado del<br>intercambio</th><th>Número de<br>incidencias</th><th>Número de horarios<br>no regulares</th><th>Número de horarios<br>regulares</th><th>Observaciones</th></tr>
<tr><td class="y">2018-2019</td><td>14/09/2018 13:36:00</td><td>Finalizado con errores</td><td class="n">316</td><td class="n">0</td><td class="n">0</td><td>ASDASAS</td></tr>
<tr><td class="y">2016-2017</td><td>13/09/2016 09:45:00</td><td>Finalizado con errores</td><td class="n">379</td><td class="n">0</td><td class="n">0</td><td>--</td></tr>
<tr><td class="y">2016-2017</td><td>13/09/2016 09:41:00</td><td>Finalizado con errores</td><td class="n">379</td><td class="n">0</td><td class="n">0</td><td>--</td></tr>
<tr><td class="y">2016-2017</td><td>13/09/2016 09:39:00</td><td>Finalizado con errores</td><td class="n">1</td><td class="n">0</td><td class="n">0</td><td>--</td></tr>
<tr><td class="y">2015-2016</td><td>14/09/2015 09:32:00</td><td>Finalizado con errores</td><td class="n">418</td><td class="n">0</td><td class="n">0</td><td>--</td></tr>
<tr><td class="y">2015-2016</td><td>14/09/2015 09:29:00</td><td>Finalizado con errores</td><td class="n">1</td><td class="n">0</td><td class="n">0</td><td>--</td></tr>
<tr><td class="y">2015-2016</td><td>14/09/2015 09:27:00</td><td>Finalizado con errores</td><td class="n">1</td><td class="n">0</td><td class="n">0</td><td>--</td></tr>
<tr><td class="y">2013-2014</td><td>13/09/2013 11:55:00</td><td>Finalizado correctamente</td><td class="n">0</td><td class="n">0</td><td class="n">383</td><td>--</td></tr>
<tr><td class="y">2013-2014</td><td>13/09/2013 11:50:00</td><td>Finalizado con errores</td><td class="n">22</td><td class="n">0</td><td class="n">0</td><td>--</td></tr>
<tr><td class="y">2013-2014</td><td>13/09/2013 11:48:00</td><td>Finalizado con errores</td><td class="n">22</td><td class="n">0</td><td class="n">0</td><td>--</td></tr>
<tr><td class="y">2013-2014</td><td>13/09/2013 11:42:00</td><td>Finalizado con errores</td><td class="n">22</td><td class="n">0</td><td class="n">0</td><td>--</td></tr>
<tr><td class="y">2013-2014</td><td>13/09/2013 11:26:00</td><td>Finalizado con errores</td><td class="n">33</td><td class="n">0</td><td class="n">0</td><td>--</td></tr>
<tr><td class="y">2013-2014</td><td>13/09/2013 11:20:00</td><td>Finalizado con errores</td><td class="n">33</td><td class="n">0</td><td class="n">0</td><td>--</td></tr>
</table>

<div id="popup" class="abs"></div>
<div id="fab" class="abs"></div><svg class="abs" style="left:1450px;top:795px" width="44" height="44" viewBox="1450 795 44 44"><path d="M1468 803H1459a2.500 2.500 0 0 0-2.500 2.500V828a2.500 2.500 0 0 0 2.500 2.500H1482a2.500 2.500 0 0 0 2.500-2.500V819" fill="none" stroke="#fff" stroke-width="2.800" stroke-linecap="round"/><path d="M1464.800 821.300V815.600L1480.700 800.300L1487.600 807.400L1472.300 821.300Z" fill="none" stroke="#fff" stroke-width="2.800" stroke-linejoin="round"/></svg>
<div id="cscroll" class="abs"></div>
<div id="cthumb" class="abs"></div>
<svg class="abs" style="left:1592px;top:282px" width="9" height="6" viewBox="0 0 9 6"><path d="M1 5l3.500-3.500L8 5z" fill="#a0a0a0"/></svg>
<svg class="abs" style="left:1592px;top:865px" width="9" height="6" viewBox="0 0 9 6"><path d="M1 1l3.500 3.500L8 1z" fill="#333"/></svg>
<div class="abs" style="left:1437px;top:426px;width:1px;height:444px;background:#ececec"></div>
<div class="abs" style="left:0;top:864px;width:1604px;height:6px;background:linear-gradient(rgba(0,0,0,0),rgba(0,0,0,.17))"></div>
<div id="wedge" class="abs"></div>

</body>
</html>
